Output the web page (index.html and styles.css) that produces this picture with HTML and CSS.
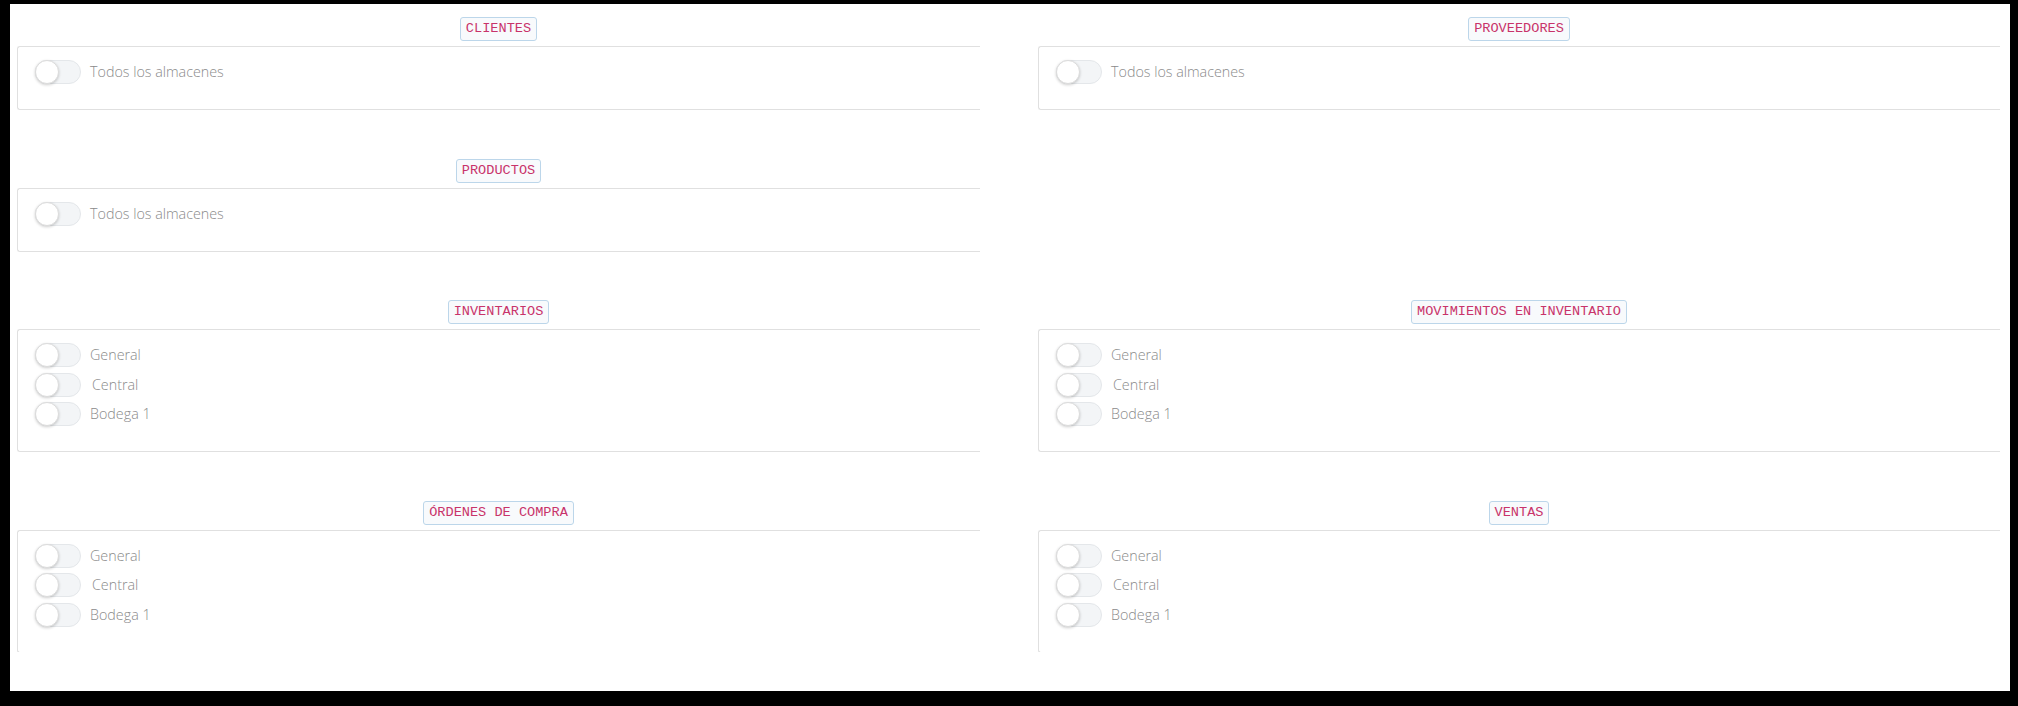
FILE: index.html
```html
<!DOCTYPE html>
<html lang="es">
<head>
<meta charset="utf-8">
<title>Permisos por almacén</title>
<link rel="stylesheet" href="styles.css">
</head>
<body>
<div class="frame">
  <div class="viewport">
    <div class="grid">
      <section class="section">
        <div class="heading"><code class="badge">CLIENTES</code></div>
        <div class="card">
          <label class="item"><span class="toggle"><span class="knob"></span></span><span class="label">Todos los almacenes</span></label>
        </div>
      </section>
      <section class="section">
        <div class="heading"><code class="badge">PROVEEDORES</code></div>
        <div class="card">
          <label class="item"><span class="toggle"><span class="knob"></span></span><span class="label">Todos los almacenes</span></label>
        </div>
      </section>

      <section class="section">
        <div class="heading"><code class="badge">PRODUCTOS</code></div>
        <div class="card">
          <label class="item"><span class="toggle"><span class="knob"></span></span><span class="label">Todos los almacenes</span></label>
        </div>
      </section>
      <div class="section empty"></div>

      <section class="section">
        <div class="heading"><code class="badge">INVENTARIOS</code></div>
        <div class="card">
          <label class="item"><span class="toggle"><span class="knob"></span></span><span class="label">General</span></label>
          <label class="item"><span class="toggle"><span class="knob"></span></span><span class="label indent">Central</span></label>
          <label class="item"><span class="toggle"><span class="knob"></span></span><span class="label">Bodega 1</span></label>
        </div>
      </section>
      <section class="section">
        <div class="heading"><code class="badge">MOVIMIENTOS EN INVENTARIO</code></div>
        <div class="card">
          <label class="item"><span class="toggle"><span class="knob"></span></span><span class="label">General</span></label>
          <label class="item"><span class="toggle"><span class="knob"></span></span><span class="label indent">Central</span></label>
          <label class="item"><span class="toggle"><span class="knob"></span></span><span class="label">Bodega 1</span></label>
        </div>
      </section>

      <section class="section">
        <div class="heading"><code class="badge">ÓRDENES DE COMPRA</code></div>
        <div class="card">
          <label class="item"><span class="toggle"><span class="knob"></span></span><span class="label">General</span></label>
          <label class="item"><span class="toggle"><span class="knob"></span></span><span class="label indent">Central</span></label>
          <label class="item"><span class="toggle"><span class="knob"></span></span><span class="label">Bodega 1</span></label>
        </div>
      </section>
      <section class="section">
        <div class="heading"><code class="badge">VENTAS</code></div>
        <div class="card">
          <label class="item"><span class="toggle"><span class="knob"></span></span><span class="label">General</span></label>
          <label class="item"><span class="toggle"><span class="knob"></span></span><span class="label indent">Central</span></label>
          <label class="item"><span class="toggle"><span class="knob"></span></span><span class="label">Bodega 1</span></label>
        </div>
      </section>
    </div>
  </div>
  <div class="footer"></div>
</div>
</body>
</html>
```

FILE: styles.css
```css
html, body {
  margin: 0;
  padding: 0;
  background: #000;
}

body {
  font-family: "Open Sans", "Liberation Sans", sans-serif;
  width: 2018px;
  height: 706px;
  overflow: hidden;
}

.frame {
  margin: 4px 0 0 10px;
  width: 2000px;
  height: 687px;
  background: #fff;
  display: flex;
  flex-direction: column;
}

.viewport {
  height: 648px;
  overflow: hidden;
  padding: 11px 10px 0 7px;
  box-sizing: border-box;
}

.footer {
  flex: 1;
  background: #fff;
}

.grid {
  display: grid;
  grid-template-columns: 963px 962px;
  column-gap: 58px;
  row-gap: 46.5px;
  align-items: start;
}

.section {
  display: flex;
  flex-direction: column;
  gap: 7px;
}

.heading {
  text-align: center;
  height: 24px;
}

.badge {
  display: inline-block;
  box-sizing: border-box;
  height: 24px;
  line-height: 22px;
  padding: 0 5px;
  font-family: "Liberation Mono", "DejaVu Sans Mono", monospace;
  font-size: 13.6px;
  color: #c8336a;
  background: #f8fafc;
  border: 1px solid #bcd6ea;
  border-radius: 3px;
}

.card {
  border: 1px solid #e0e0e0;
  border-right: none;
  border-radius: 3px 0 0 3px;
  padding: 13px 17px 25px 17px;
  display: flex;
  flex-direction: column;
  gap: 5.5px;
}

.item {
  display: flex;
  align-items: center;
  height: 24px;
  gap: 9px;
}

.toggle {
  position: relative;
  width: 46px;
  height: 24px;
  box-sizing: border-box;
  border: 1px solid #e4e7ea;
  border-radius: 12px;
  background: #f3f5f7;
  flex: none;
}

.knob {
  position: absolute;
  left: -1px;
  top: -1px;
  width: 24px;
  height: 24px;
  box-sizing: border-box;
  border-radius: 50%;
  background: #fff;
  border: 1px solid #dcdcdc;
  box-shadow: 0 1px 3px rgba(0, 0, 0, 0.2);
}

.label {
  font-size: 14.3px;
  font-weight: 300;
  color: #8a8a8a;
  line-height: 24px;
}

.label.indent {
  padding-left: 2px;
}
```
